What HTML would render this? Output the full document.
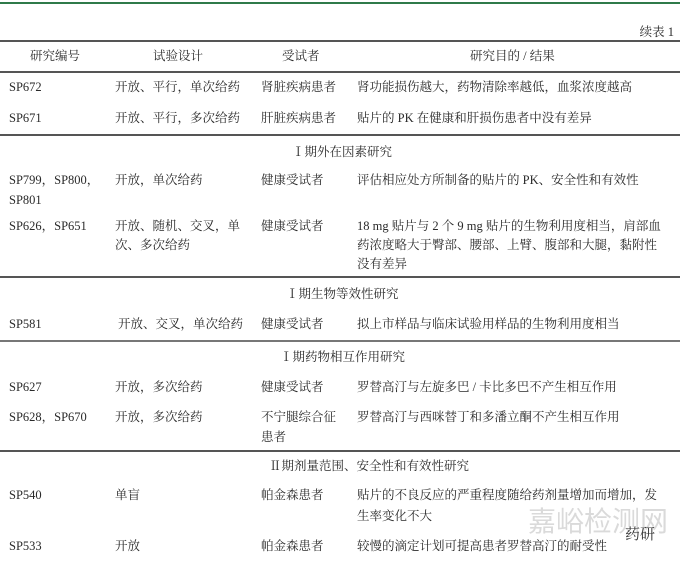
<!DOCTYPE html><html><head><meta charset="utf-8"><style>
body{margin:0;width:680px;height:565px;background:#fff;position:relative;overflow:hidden;font-family:"Liberation Serif","Noto Serif CJK SC",serif;font-size:12.5px;color:#2a2a2a}
.t{position:absolute;white-space:nowrap;line-height:20px;transform:translateY(-10px)}
.l{position:absolute;left:0;width:680px;height:1.5px;background:#555}
</style></head><body>
<div style="position:absolute;left:0;top:2px;width:680px;height:2px;background:#2f7a4a"></div>
<div class="t" style="right:6px;top:32px">续表 1</div>
<div class="l" style="top:40px"></div>
<div class="t" style="left:30px;top:56px">研究编号</div>
<div class="t" style="left:153px;top:56px">试验设计</div>
<div class="t" style="left:282px;top:56px">受试者</div>
<div class="t" style="left:470px;top:56px">研究目的 / 结果</div>
<div class="l" style="top:71px"></div>
<div class="t" style="left:9px;top:87px">SP672</div><div class="t" style="left:115px;top:87px">开放、平行，单次给药</div><div class="t" style="left:261px;top:87px">肾脏疾病患者</div><div class="t" style="left:357px;top:87px">肾功能损伤越大，药物清除率越低，血浆浓度越高</div>
<div class="t" style="left:9px;top:118px">SP671</div><div class="t" style="left:115px;top:118px">开放、平行，多次给药</div><div class="t" style="left:261px;top:118px">肝脏疾病患者</div><div class="t" style="left:357px;top:118px">贴片的 PK 在健康和肝损伤患者中没有差异</div>
<div class="l" style="top:134px"></div>
<div class="t" style="left:292px;top:152px">Ⅰ期外在因素研究</div>
<div class="t" style="left:9px;top:180px">SP799，SP800，</div><div class="t" style="left:9px;top:200px">SP801</div><div class="t" style="left:115px;top:180px">开放，单次给药</div><div class="t" style="left:261px;top:180px">健康受试者</div><div class="t" style="left:357px;top:180px">评估相应处方所制备的贴片的 PK、安全性和有效性</div>
<div class="t" style="left:9px;top:226px">SP626，SP651</div><div class="t" style="left:115px;top:226px">开放、随机、交叉，单</div><div class="t" style="left:115px;top:245px">次、多次给药</div><div class="t" style="left:261px;top:226px">健康受试者</div>
<div class="t" style="left:357px;top:226px">18 mg 贴片与 2 个 9 mg 贴片的生物利用度相当，肩部血</div><div class="t" style="left:357px;top:245px">药浓度略大于臀部、腰部、上臂、腹部和大腿，黏附性</div><div class="t" style="left:357px;top:264px">没有差异</div>
<div class="l" style="top:276px"></div>
<div class="t" style="left:286px;top:294px">Ⅰ期生物等效性研究</div>
<div class="t" style="left:9px;top:324px">SP581</div><div class="t" style="left:118px;top:324px">开放、交叉，单次给药</div><div class="t" style="left:261px;top:324px">健康受试者</div><div class="t" style="left:357px;top:324px">拟上市样品与临床试验用样品的生物利用度相当</div>
<div class="l" style="top:340px;height:2px;background:#777"></div>
<div class="t" style="left:280px;top:357px">Ⅰ期药物相互作用研究</div>
<div class="t" style="left:9px;top:387px">SP627</div><div class="t" style="left:115px;top:387px">开放，多次给药</div><div class="t" style="left:261px;top:387px">健康受试者</div><div class="t" style="left:357px;top:387px">罗替高汀与左旋多巴 / 卡比多巴不产生相互作用</div>
<div class="t" style="left:9px;top:417px">SP628，SP670</div><div class="t" style="left:115px;top:417px">开放，多次给药</div><div class="t" style="left:261px;top:417px">不宁腿综合征</div><div class="t" style="left:261px;top:437px">患者</div><div class="t" style="left:357px;top:417px">罗替高汀与西咪替丁和多潘立酮不产生相互作用</div>
<div class="l" style="top:450px"></div>
<div class="t" style="left:269px;top:466px">Ⅱ期剂量范围、安全性和有效性研究</div>
<div class="t" style="left:9px;top:495px">SP540</div><div class="t" style="left:115px;top:495px">单盲</div><div class="t" style="left:261px;top:495px">帕金森患者</div><div class="t" style="left:357px;top:495px">贴片的不良反应的严重程度随给药剂量增加而增加，发</div><div class="t" style="left:357px;top:516px">生率变化不大</div>
<div class="t" style="left:9px;top:546px">SP533</div><div class="t" style="left:115px;top:546px">开放</div><div class="t" style="left:261px;top:546px">帕金森患者</div><div class="t" style="left:357px;top:546px">较慢的滴定计划可提高患者罗替高汀的耐受性</div>
<div class="t" style="left:528px;top:512px;font-family:'Noto Sans CJK SC',sans-serif;font-size:28px;line-height:36px;color:rgba(150,150,150,0.35)">嘉峪检测网</div>
<div class="t" style="left:625px;top:535px;font-size:15px;color:#333">药研</div>
</body></html>
